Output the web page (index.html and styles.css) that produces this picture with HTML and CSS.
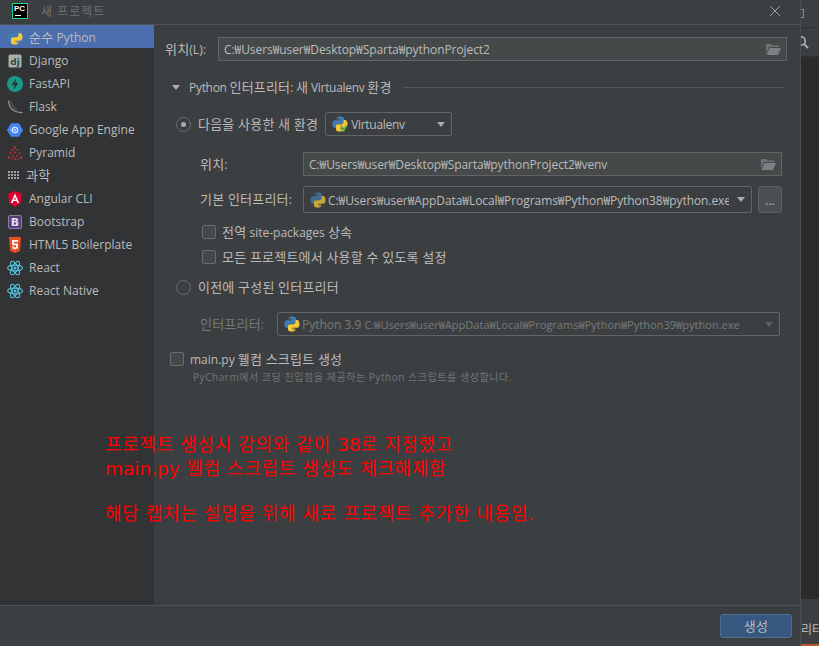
FILE: index.html
```html
<!DOCTYPE html>
<html lang="ko">
<head>
    <meta charset="UTF-8">
    <meta name="viewport" content="width=device-width, initial-scale=1.0">
    <title>새 프로젝트</title>
    <link rel="stylesheet" href="styles.css">
</head>
<body>

<svg class="defs" width="0" height="0">
    <symbol id="py" viewBox="0 0 16 16">
        <path fill="#3f7cb0" d="M7.9 .5C4.6 .5 4.7 2 4.7 2V3.6H8.1V4.2H3.1S.5 3.9 .5 8s2.4 4.1 2.4 4.1H4.5V10S4.4 7.8 6.7 7.8H9.9S12 7.8 12 5.8V2.6S12.3 .5 7.9 .5ZM6 1.7A.7.7 0 1 1 6 3.1.7.7 0 0 1 6 1.7Z"/>
        <path fill="#f5c93c" d="M8.1 15.5C11.4 15.5 11.3 14 11.3 14V12.4H7.9V11.8H12.9S15.5 12.1 15.5 8s-2.4-4.1-2.4-4.1H11.5V6S11.6 8.2 9.3 8.2H6.1S4 8.2 4 10.2V13.4S3.7 15.5 8.1 15.5ZM10 14.3A.7.7 0 1 1 10 12.9.7.7 0 0 1 10 14.3Z"/>
    </symbol>
    <symbol id="react" viewBox="0 0 16 16">
        <g fill="none" stroke="#53c1de" stroke-width="1.1">
            <ellipse cx="8" cy="8" rx="7.4" ry="2.9"/>
            <ellipse cx="8" cy="8" rx="7.4" ry="2.9" transform="rotate(60 8 8)"/>
            <ellipse cx="8" cy="8" rx="7.4" ry="2.9" transform="rotate(120 8 8)"/>
        </g>
        <circle cx="8" cy="8" r="1.5" fill="#53c1de"/>
    </symbol>
    <symbol id="folder" viewBox="0 0 16 14">
        <path fill="#6e7476" d="M1 2H6L7.5 3.5H14V5H4L1 12Z"/>
        <path fill="#7b8284" d="M4.5 6H16L13 13H1.6Z"/>
    </symbol>
</svg>

<div class="app">
    <div class="dialog">
        <div class="titlebar">
            <div class="pc-logo"><span>PC</span><i></i></div>
            <div class="title">새 프로젝트</div>
            <svg class="close" width="12" height="12" viewBox="0 0 12 12"><path d="M1 1L11 11M11 1L1 11" stroke="#9da0a2" stroke-width="1" fill="none"/></svg>
        </div>

        <div class="content">
            <ul class="sidebar">
                <li class="selected"><svg class="ico" width="16" height="16"><use href="#py"/></svg><span><span class="ko">순수</span> Python</span></li>
                <li>
                    <svg class="ico" width="16" height="16" viewBox="0 0 16 16"><rect x="1.5" y="1.5" width="13" height="13" rx="1.5" fill="#a9b2ae"/><text x="8" y="11.5" text-anchor="middle" class="ico-text" fill="#2f4a3c">dj</text></svg>
                    Django
                </li>
                <li>
                    <svg class="ico" width="16" height="16" viewBox="0 0 16 16"><circle cx="8" cy="8" r="8" fill="#17998a"/><path fill="#2f3335" d="M9 2.5L4.5 9H7.5L6.8 13.5L11.5 6.8H8.4Z"/></svg>
                    FastAPI
                </li>
                <li>
                    <svg class="ico" width="16" height="16" viewBox="0 0 16 16"><path fill="none" stroke="#8f9294" stroke-width="1.3" d="M1.5 1.5C1.8 8 5.5 13.5 15.5 13.6"/><path fill="none" stroke="#6c6f71" stroke-width="1" d="M3 1.5C5 4 5.5 9 10 11"/></svg>
                    Flask
                </li>
                <li>
                    <svg class="ico" width="16" height="16" viewBox="0 0 16 16"><path fill="#4285f4" d="M4 1.2H12L16 8L12 14.8H4L0 8Z"/><circle cx="8" cy="8" r="2.6" fill="none" stroke="#dce6f8" stroke-width="1.2"/><circle cx="8" cy="8" r=".9" fill="#dce6f8"/><path stroke="#dce6f8" d="M3.5 8H5.4"/></svg>
                    Google App Engine
                </li>
                <li>
                    <svg class="ico" width="16" height="16" viewBox="0 0 16 16"><g fill="#c22d2d"><circle cx="8" cy="2.5" r="1.2"/><circle cx="5.5" cy="5" r="1"/><circle cx="10.5" cy="5" r="1"/><circle cx="3.5" cy="8" r="1"/><circle cx="8" cy="7.5" r="1"/><circle cx="12.5" cy="8" r="1"/><circle cx="2" cy="12.5" r="1.2"/><circle cx="6" cy="11" r="1"/><circle cx="10" cy="11" r="1"/><circle cx="14" cy="12.5" r="1.2"/><circle cx="8" cy="14" r="1"/><circle cx="5" cy="14" r=".8"/><circle cx="11" cy="14" r=".8"/></g></svg>
                    Pyramid
                </li>
                <li class="narrow">
                    <svg class="ico" width="12" height="12" viewBox="0 0 12 12"><path fill="#9fa2a4" d="M0 1H2V3H0ZM3 1H5V3H3ZM6 1H8V3H6ZM9 1H11V3H9ZM0 4H2V6H0ZM3 4H5V6H3ZM6 4H8V6H6ZM9 4H11V6H9ZM0 7H2V9H0ZM3 7H5V9H3ZM6 7H8V9H6ZM9 7H11V9H9Z"/></svg>
                    <span class="ko">과학</span>
                </li>
                <li>
                    <svg class="ico" width="16" height="16" viewBox="0 0 16 16"><path fill="#dd0031" d="M8 0L15 2.5L14 12L8 16L2 12L1 2.5Z"/><path fill="#fff" d="M8 2.5L3.8 12H5.6L6.4 10H9.6L10.4 12H12.2ZM7 8.5L8 6L9 8.5Z"/></svg>
                    Angular CLI
                </li>
                <li>
                    <svg class="ico" width="16" height="16" viewBox="0 0 16 16"><rect x="1.5" y="1.5" width="13" height="13" rx="1.5" fill="#563d7c" stroke="#8d7ba8"/><text x="8" y="12" text-anchor="middle" class="ico-b" fill="#e4dff0">B</text></svg>
                    Bootstrap
                </li>
                <li>
                    <svg class="ico" width="16" height="16" viewBox="0 0 16 16"><path fill="#e44d26" d="M2 0H14L13 14L8 16L3 14Z"/><path fill="#fff" d="M5 3H11.3L11.1 4.8H6.9L7 6.6H11L10.6 11.6L8 12.5L5.4 11.6L5.3 9.5H7L7.1 10.3L8 10.6L9 10.3L9.1 8.3H5.3Z"/></svg>
                    HTML5 Boilerplate
                </li>
                <li><svg class="ico" width="16" height="16"><use href="#react"/></svg>React</li>
                <li><svg class="ico" width="16" height="16"><use href="#react"/></svg>React Native</li>
            </ul>

            <div class="form">
                <div class="row row-location">
                    <label class="label-top"><span class="ko">위치</span>(L):</label>
                    <div class="field field-top">
                        <span class="path">C:₩Users₩user₩Desktop₩Sparta₩pythonProject2</span>
                        <svg class="folder" width="16" height="14"><use href="#folder"/></svg>
                    </div>
                </div>

                <div class="section-head">
                    <span class="triangle"></span>
                    <span class="section-title">Python <span class="ko">인터프리터</span>: <span class="ko">새</span> Virtualenv <span class="ko">환경</span></span>
                    <span class="section-line"></span>
                </div>

                <div class="row row-new-env">
                    <span class="radio checked"></span>
                    <span class="radio-label ko">다음을 사용한 새 환경</span>
                    <div class="combo combo-env">
                        <svg class="combo-ico" width="16" height="16" viewBox="0 0 16 16">
                            <use href="#py" width="16" height="16"/>
                            <path d="M9 9L11.5 15L14.5 9" fill="none" stroke="#62b543" stroke-width="1.6"/>
                        </svg>
                        <span class="tight">Virtualenv</span>
                        <span class="arrow"></span>
                    </div>
                </div>

                <div class="row row-venv">
                    <label class="label-sub"><span class="ko">위치</span>:</label>
                    <div class="field field-venv">
                        <span class="path">C:₩Users₩user₩Desktop₩Sparta₩pythonProject2₩venv</span>
                        <svg class="folder" width="16" height="14"><use href="#folder"/></svg>
                    </div>
                </div>

                <div class="row row-base">
                    <label class="label-sub"><span class="ko">기본 인터프리터</span>:</label>
                    <div class="combo combo-base">
                        <svg class="combo-ico dim" width="16" height="16"><use href="#py"/></svg>
                        <span class="clip path">C:₩Users₩user₩AppData₩Local₩Programs₩Python₩Python38₩python.exe</span>
                        <span class="arrow"></span>
                    </div>
                    <div class="more">...</div>
                </div>

                <div class="row row-check1"><span class="check"></span><span><span class="ko">전역</span> site-packages <span class="ko">상속</span></span></div>
                <div class="row row-check2"><span class="check"></span><span class="ko">모든 프로젝트에서 사용할 수 있도록 설정</span></div>

                <div class="row row-old-env">
                    <span class="radio"></span>
                    <span class="radio-label ko">이전에 구성된 인터프리터</span>
                </div>

                <div class="row row-old-combo disabled">
                    <label class="label-old"><span class="ko">인터프리터</span>:</label>
                    <div class="combo combo-old">
                        <svg class="combo-ico" width="16" height="16"><use href="#py"/></svg>
                        <span class="py-name">Python 3.9</span>
                        <span class="py-path">C:₩Users₩user₩AppData₩Local₩Programs₩Python₩Python39₩python.exe</span>
                        <span class="arrow"></span>
                    </div>
                </div>

                <div class="row row-main"><span class="check"></span><span>main.py <span class="ko">웰컴 스크립트 생성</span></span></div>
                <div class="hint">PyCharm에서 코딩 진입점을 제공하는 Python 스크립트를 생성합니다.</div>
            </div>
        </div>

        <div class="footer">
            <button class="create"><span class="ko">생성</span></button>
        </div>

        <div class="note">
            <div>프로젝트 생성시 강의와 같이 <span class="note-latin">38</span>로 지정했고</div>
            <div><span class="note-latin">main.py</span> 웰컴 스크립트 생성도 체크해제함</div>
            <div class="note-gap">해당 캡처는 설명을 위해 새로 프로젝트 추가한 내용임.</div>
        </div>
    </div>

    <div class="ide-strip">
        <div class="strip-top"><i></i></div>
        <div class="strip-search">
            <svg width="16" height="16" viewBox="0 0 16 16"><circle cx="5" cy="7" r="4.2" fill="none" stroke="#a9abad" stroke-width="1.7"/><path d="M8 10L12 14" stroke="#a9abad" stroke-width="2"/></svg>
        </div>
        <div class="strip-editor"></div>
        <div class="strip-bottom"><span>리터</span></div>
        <div class="strip-orange"></div>
    </div>
</div>

</body>
</html>
```

FILE: styles.css
```css
* {
    box-sizing: border-box;
}
html, body {
    margin: 0;
    padding: 0;
    overflow: hidden;
}
body {
    font-family: "Open Sans", "Noto Sans CJK KR", sans-serif;
    font-size: 12px;
    color: #bbbbbb;
    background-color: #2b2b2b;
}
.defs {
    position: absolute;
}
.app {
    display: flex;
    width: 819px;
    height: 646px;
}
/* 한글은 원본에서 라틴 글자보다 크게 보임 */
.ko {
    font-size: 13px;
    line-height: 1;
    letter-spacing: .2px;
}
.path {
    letter-spacing: -.07px;
}
.tight {
    letter-spacing: -.3px;
}

/* dialog */
.dialog {
    position: relative;
    display: flex;
    flex-direction: column;
    width: 801px;
    height: 646px;
    background-color: #3c3f41;
    border-right: 1px solid #4a4d4f;
}
.titlebar {
    display: flex;
    align-items: center;
    flex: none;
    height: 25px;
    padding: 0 0 3px 12px;
    border-bottom: 1px solid #505354;
}
.pc-logo {
    position: relative;
    width: 16px;
    height: 16px;
    background-color: #000;
    border: 1px solid #21d789;
    color: #fff;
    font-family: "Liberation Sans", sans-serif;
    font-size: 8px;
    font-weight: bold;
    line-height: 9px;
    padding-left: 1px;
}
.pc-logo span {
    display: block;
}
.pc-logo i {
    position: absolute;
    left: 2px;
    bottom: 2px;
    width: 6px;
    height: 1px;
    background-color: #fff;
}
.title {
    margin-left: 13px;
    color: #6f7274;
    letter-spacing: 1px;
}
.close {
    margin-left: auto;
    margin-right: 19px;
}
.content {
    display: flex;
    flex: 1;
    min-height: 0;
}

/* left list */
.sidebar {
    flex: none;
    width: 154px;
    margin: 0;
    padding: 0;
    list-style: none;
    background-color: #313335;
}
.sidebar li {
    display: flex;
    align-items: center;
    height: 23px;
    padding-left: 7px;
    color: #bbbbbb;
}
.sidebar li.selected {
    margin-bottom: 1px;
    padding-top: 1px;
    background-color: #4b6eaf;
}
.sidebar li.narrow {
    padding-left: 8px;
}
.ico {
    flex: none;
    margin-right: 6px;
}
.ico-text {
    font-family: "DejaVu Sans", sans-serif;
    font-size: 9px;
    font-weight: bold;
}
.ico-b {
    font-family: "DejaVu Sans", sans-serif;
    font-size: 11px;
    font-weight: bold;
}

/* form */
.form {
    flex: 1;
    min-width: 0;
    padding-left: 11px;
}
.row {
    display: flex;
    align-items: center;
}
.field {
    display: flex;
    align-items: center;
    height: 24px;
    padding: 0 5px;
    background-color: #45494a;
    border: 1px solid #646464;
    color: #bbbbbb;
}
.folder {
    margin-left: auto;
}
.row-location {
    margin-top: 12px;
}
.label-top {
    width: 53px;
}
.field-top {
    width: 569px;
}
.section-head {
    display: flex;
    align-items: center;
    width: 613px;
    height: 16px;
    margin-top: 18px;
    margin-left: 7px;
}
.triangle {
    flex: none;
    width: 0;
    height: 0;
    border-left: 4.5px solid transparent;
    border-right: 4.5px solid transparent;
    border-top: 5px solid #a9abad;
}
.section-title {
    margin-left: 9px;
    letter-spacing: -.3px;
    white-space: nowrap;
}
.section-line {
    flex: 1;
    height: 1px;
    margin-left: 11px;
    background-color: #55585a;
}
.radio {
    position: relative;
    flex: none;
    width: 15px;
    height: 15px;
    margin-left: 11px;
    border: 1px solid #6b6b6b;
    border-radius: 50%;
    background-color: #3c3f41;
}
.radio.checked::after {
    content: "";
    position: absolute;
    left: 4px;
    top: 4px;
    width: 5px;
    height: 5px;
    border-radius: 50%;
    background-color: #a9abad;
}
.radio-label {
    margin-left: 7px;
}
.row-new-env {
    margin-top: 17px;
}
.combo {
    display: flex;
    align-items: center;
    height: 24px;
    padding: 0 6px;
    border: 1px solid #646464;
    border-radius: 2px;
    white-space: nowrap;
}
.combo-env {
    width: 127px;
    margin-left: 7px;
}
.combo-ico {
    flex: none;
    margin-right: 3px;
}
.combo-ico.dim {
    opacity: .75;
}
.combo-base .combo-ico {
    margin-right: 2px;
}
.arrow {
    flex: none;
    width: 0;
    height: 0;
    margin-left: auto;
    border-left: 4.5px solid transparent;
    border-right: 4.5px solid transparent;
    border-top: 5px solid #a9abad;
}
.disabled .arrow {
    border-top-color: #5f6264;
}
.label-sub {
    flex: none;
    width: 103px;
    margin-left: 35px;
}
.row-venv {
    margin-top: 16px;
}
.field-venv {
    width: 479px;
}
.row-base {
    margin-top: 10px;
}
.combo-base {
    width: 449px;
    height: 27px;
}
.clip {
    overflow: hidden;
    max-width: 401px;
}
.more {
    flex: none;
    width: 24px;
    height: 27px;
    margin-left: 6px;
    border: 1px solid #5e6060;
    border-radius: 3px;
    background-color: #4c5052;
    text-align: center;
    line-height: 28px;
}
.check {
    flex: none;
    width: 14px;
    height: 14px;
    margin-right: 6px;
    border: 1px solid #6b6b6b;
    border-radius: 2px;
    background-color: #43494a;
}
.row-check1 {
    height: 16px;
    margin-top: 11px;
    margin-left: 37px;
}
.row-check2 {
    height: 16px;
    margin-top: 9px;
    margin-left: 37px;
}
.row-old-env {
    margin-top: 15px;
}
.row-old-combo {
    margin-top: 17px;
    margin-left: 35px;
}
.disabled {
    color: #777a7c;
}
.label-old {
    flex: none;
    width: 77px;
}
.combo-old {
    width: 503px;
}
.py-name {
    margin-left: -1px;
}
.py-path {
    margin-left: 3px;
    font-size: 11px;
    letter-spacing: .03px;
}
.row-main {
    height: 18px;
    margin-top: 14px;
    margin-left: 5px;
}
.hint {
    margin-top: 1px;
    margin-left: 28px;
    font-size: 10px;
    letter-spacing: .55px;
    color: #70767a;
}

/* bottom */
.footer {
    display: flex;
    align-items: flex-start;
    justify-content: flex-end;
    flex: none;
    height: 41px;
    padding: 8px 8px 0 0;
    border-top: 1px solid #505354;
}
.create {
    width: 72px;
    height: 24px;
    padding: 0;
    border: 1px solid #4c708c;
    border-radius: 3px;
    background-color: #365880;
    color: #bbbbbb;
    font-family: inherit;
    font-size: 12px;
}

/* red memo drawn over the capture */
.note {
    position: absolute;
    left: 105px;
    top: 433px;
    color: #ff0000;
    font-family: "DejaVu Sans", "Noto Sans CJK KR", sans-serif;
    font-size: 18px;
    letter-spacing: .65px;
    line-height: 24px;
    white-space: nowrap;
}
.note-latin {
    font-size: 18.5px;
    letter-spacing: 0;
}
.note-gap {
    margin-top: 21px;
}

/* IDE behind the dialog */
.ide-strip {
    display: flex;
    flex-direction: column;
    flex: none;
    width: 18px;
    overflow: hidden;
}
.strip-top {
    height: 28px;
    background-color: #3c3f41;
    border-bottom: 1px solid #323232;
    padding-top: 9px;
}
.strip-top i {
    display: block;
    width: 3px;
    height: 9px;
    border: 1px solid #8a8c8e;
    border-left: 0;
}
.strip-search {
    height: 29px;
    padding-top: 6px;
    background-color: #3c3f41;
    border-bottom: 1px solid #323232;
    margin-left: -5px;
}
.strip-editor {
    flex: 1;
    background-color: #2b2b2b;
}
.strip-bottom {
    height: 45px;
    padding-top: 21px;
    background-color: #3c3f41;
    color: #bbbbbb;
    white-space: nowrap;
}
.strip-orange {
    height: 2px;
    background-color: #b05a30;
}
```
